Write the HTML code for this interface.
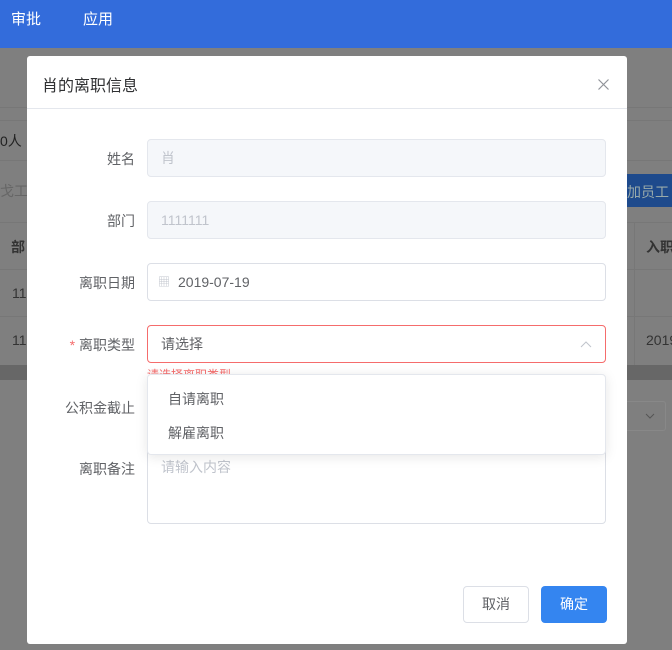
<!DOCTYPE html>
<html><head><meta charset="utf-8"><style>
*{box-sizing:border-box;margin:0;padding:0}
body{width:672px;height:650px;overflow:hidden;background:#7f7f7f;font-family:"Liberation Sans","Noto Sans CJK SC",sans-serif;position:relative;font-size:14px;color:#606266;white-space:nowrap}
.a{position:absolute}
.top{left:0;top:0;width:672px;height:48px;background:#336cdb;color:#fff;font-size:15px}
.hl{height:1px;background:#777}
.modal{left:27px;top:56px;width:600px;height:588px;background:#fff;border-radius:3px}
.lbl{width:108px;text-align:right;font-size:14px;color:#606266}
.inp{left:120px;width:459px;height:38px;border:1px solid #dcdfe6;border-radius:4px;padding-left:13px;line-height:36px;font-size:14px}
.dis{background:#f5f7fa;border-color:#e4e7ed;color:#c0c4cc}
</style></head><body>
<div class="a top"><span class="a" style="left:11px;top:8px">审批</span><span class="a" style="left:83px;top:8px">应用</span></div>
<div class="a hl" style="left:0;top:107px;width:672px"></div>
<div class="a hl" style="left:0;top:120px;width:672px"></div>
<div class="a" style="left:0;top:131px;color:#222">0人</div>
<div class="a hl" style="left:0;top:160px;width:672px"></div>
<div class="a" style="left:0;top:181px;color:#666">戈工号</div>
<div class="a" style="left:627px;top:174px;width:45px;height:33px;background:#1e4a8c;color:#9aa;padding-top:8px">加员工</div>
<div class="a hl" style="left:0;top:222px;width:672px"></div>
<div class="a" style="left:11px;top:237px;color:#333;font-weight:bold">部</div>
<div class="a" style="left:646px;top:237px;color:#333;font-weight:bold">入职</div>
<div class="a hl" style="left:0;top:269px;width:672px"></div>
<div class="a" style="left:12px;top:285px;color:#333">11</div>
<div class="a hl" style="left:0;top:316px;width:672px"></div>
<div class="a" style="left:12px;top:332px;color:#333">11</div>
<div class="a" style="left:646px;top:332px;color:#333">2019</div>
<div class="a" style="left:0;top:365px;width:672px;height:15px;background:#676767"></div>
<div class="a" style="left:634px;top:222px;width:1px;height:143px;background:#777"></div>
<div class="a" style="left:620px;top:401px;width:46px;height:30px;border:1px solid #888;border-radius:3px"><svg class="a" style="left:24px;top:11px" width="10" height="6"><path d="M1 1L5 5L9 1" stroke="#555" fill="none"/></svg></div>

<div class="a modal">
<div class="a" style="left:15px;top:16px;font-size:16px;color:#303133">肖的离职信息</div>
<svg class="a" style="left:571px;top:23px" width="11" height="11"><path d="M0.5 0.5L10.5 10.5M10.5 0.5L0.5 10.5" stroke="#909399" stroke-width="1.2"/></svg>
<div class="a" style="left:0;top:52px;width:600px;height:1px;background:#e4e7ed"></div>
<div class="a lbl" style="top:93px">姓名</div><div class="a inp dis" style="top:83px">肖</div>
<div class="a lbl" style="top:155px">部门</div><div class="a inp dis" style="top:145px">1111111</div>
<div class="a lbl" style="top:217px">离职日期</div><div class="a inp" style="top:207px;padding-left:30px;color:#606266"><span class="a" style="left:10px;top:0;color:#c0c4cc;font-size:12px">▦</span>2019-07-19</div>
<div class="a lbl" style="top:279px"><span style="color:#f56c6c">* </span>离职类型</div><div class="a inp" style="top:269px;border-color:#f56c6c">请选择<svg class="a" style="right:13px;top:15px" width="12" height="7"><path d="M1 6L6 1L11 6" stroke="#c0c4cc" fill="none"/></svg></div>
<div class="a" style="left:120px;top:310px;font-size:12px;color:#f56c6c;height:8px;overflow:hidden">请选择离职类型</div>
<div class="a lbl" style="top:342px">公积金截止</div>
<div class="a lbl" style="top:403px">离职备注</div>
<div class="a" style="left:120px;top:390px;width:459px;height:78px;border:1px solid #dcdfe6;border-radius:4px;padding:10px 13px;color:#c0c4cc">请输入内容</div>
<div class="a" style="left:120px;top:318px;width:459px;height:81px;background:#fff;border:1px solid #e4e7ed;border-radius:4px;box-shadow:0 2px 12px rgba(0,0,0,.1)">
<div class="a" style="left:20px;top:14px;color:#606266">自请离职</div>
<div class="a" style="left:20px;top:48px;color:#606266">解雇离职</div></div>
<div class="a" style="left:436px;top:530px;width:66px;height:37px;border:1px solid #dcdfe6;border-radius:4px;text-align:center;line-height:35px;color:#606266">取消</div>
<div class="a" style="left:514px;top:530px;width:66px;height:37px;background:#3485f0;border-radius:4px;text-align:center;line-height:37px;color:#fff">确定</div>
</div>
</body></html>
